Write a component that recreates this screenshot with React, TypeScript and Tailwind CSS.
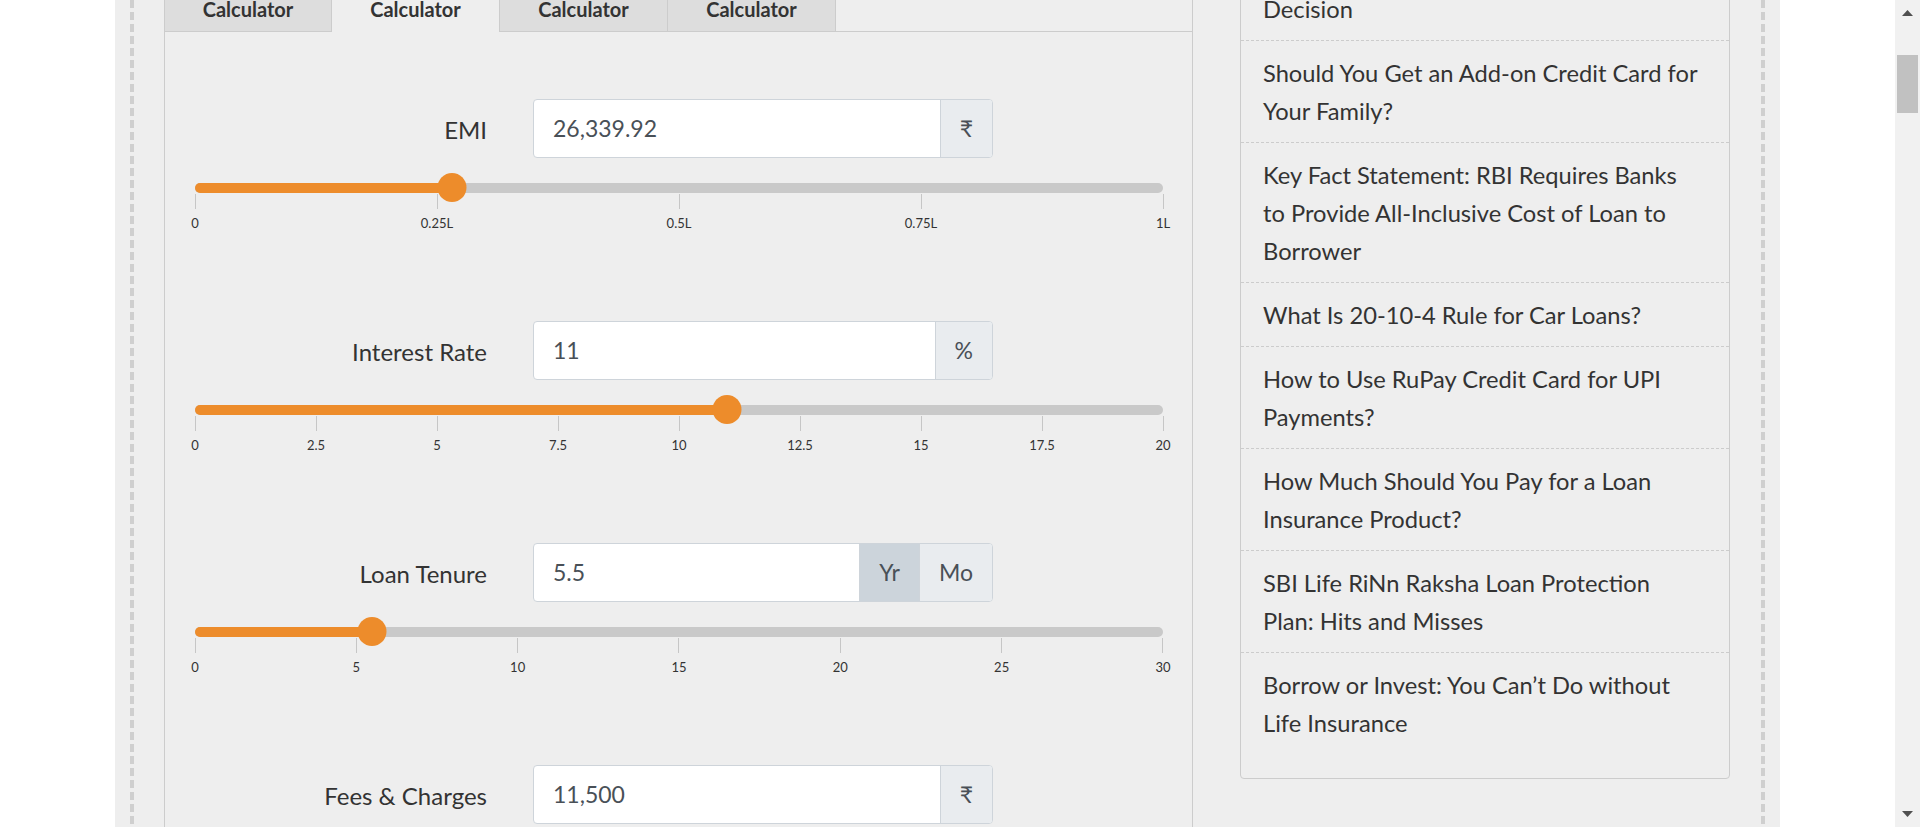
import React from "react";

type Unit = { text: string; active?: boolean };

type RowProps = {
  label: string;
  value: string;
  units: Unit[];
  pct: number;
  ticks: string[];
};

function CalcRow({ label, value, units, pct, ticks }: RowProps) {
  return (
    <div className="mb-[91px]">
      <div className="flex items-center gap-[46px]">
        <div className="w-[292px] pt-[3px] text-right text-[24px] leading-none text-[#333]">{label}</div>
        <div className="flex h-[59px] w-[460px] overflow-hidden rounded-[4px] border border-[#ced4da] bg-white">
          <div className="flex flex-1 items-center pl-[19px] text-[23px] text-[#495057]">{value}</div>
          {units.map((u, i) => (
            <div
              key={i}
              className={
                u.active
                  ? "flex items-center border-l border-[#ced4da] bg-[#ccd4db] px-[19px] text-[23px] text-[#495057]"
                  : "flex items-center border-l border-[#ced4da] bg-[#e9ecef] px-[19px] text-[23px] text-[#495057]"
              }
            >
              {u.text}
            </div>
          ))}
        </div>
      </div>
      <div className="relative mt-[25px] h-[10px] rounded-full bg-[#c9c9c9]">
        <div className="h-full rounded-full bg-[#ed8c2b]" style={{ width: `${pct}%` }} />
        <div
          className="absolute top-[-10px] h-[29px] w-[29px] -translate-x-1/2 rounded-full bg-[#ed8c2b]"
          style={{ left: `${pct}%` }}
        />
      </div>
      <div className="mt-[1px] flex justify-between">
        {ticks.map((t, i) => (
          <div key={i} className="flex w-0 flex-col items-center">
            <div className="h-[15px] w-px shrink-0 bg-[#c6c6c6]" />
            <span className="mt-[7px] whitespace-nowrap text-[13px] leading-[14px] text-[#333]">{t}</span>
          </div>
        ))}
      </div>
    </div>
  );
}

const sideItems: string[][] = [
  ["Decision"],
  ["Should You Get an Add-on Credit Card for", "Your Family?"],
  ["Key Fact Statement: RBI Requires Banks", "to Provide All-Inclusive Cost of Loan to", "Borrower"],
  ["What Is 20-10-4 Rule for Car Loans?"],
  ["How to Use RuPay Credit Card for UPI", "Payments?"],
  ["How Much Should You Pay for a Loan", "Insurance Product?"],
  ["SBI Life RiNn Raksha Loan Protection", "Plan: Hits and Misses"],
  ["Borrow or Invest: You Can\u2019t Do without", "Life Insurance"],
];

const dashed =
  "w-[4px] shrink-0 bg-[repeating-linear-gradient(to_bottom,#cfcfcf_0px,#cfcfcf_8px,transparent_8px,transparent_12px)]";

export default function App() {
  const tabs = ["Calculator", "Calculator", "Calculator", "Calculator"];
  return (
    <div className="flex h-[827px] w-[1920px] overflow-hidden bg-white font-[Lato,sans-serif]">
      <div className="flex flex-1 justify-center">
        <div className="flex w-[1665px] bg-[#eeeeee] px-[15px]">
          <div className={dashed} />
          <div className="flex flex-1 items-start gap-[47px] pl-[30px] pr-[31px]">
            {/* main calculator column */}
            <div className="flex w-[1029px] shrink-0 flex-col">
              <div className="flex h-[32px] shrink-0">
                {tabs.map((t, i) => (
                  <div
                    key={i}
                    className={
                      i === 1
                        ? "flex w-[168px] justify-center border-r border-[#cccccc] bg-[#eeeeee] text-[20px] font-bold leading-[18px] text-[#333]"
                        : i === 0
                        ? "flex w-[168px] justify-center border-x border-b border-[#cccccc] bg-[#dddddd] text-[20px] font-bold leading-[18px] text-[#333]"
                        : "flex w-[168px] justify-center border-r border-b border-[#cccccc] bg-[#dddddd] text-[20px] font-bold leading-[18px] text-[#333]"
                    }
                  >
                    {t}
                  </div>
                ))}
                <div className="flex-1 border-b border-r border-[#cccccc]" />
              </div>
              <div className="border-x border-b border-[#cccccc] bg-[#eeeeee] pl-[30px] pr-[29px] pt-[67px]">
                <CalcRow
                  label="EMI"
                  value="26,339.92"
                  units={[{ text: "\u20B9" }]}
                  pct={26.6}
                  ticks={["0", "0.25L", "0.5L", "0.75L", "1L"]}
                />
                <CalcRow
                  label="Interest Rate"
                  value="11"
                  units={[{ text: "%" }]}
                  pct={55}
                  ticks={["0", "2.5", "5", "7.5", "10", "12.5", "15", "17.5", "20"]}
                />
                <CalcRow
                  label="Loan Tenure"
                  value="5.5"
                  units={[{ text: "Yr", active: true }, { text: "Mo" }]}
                  pct={18.33}
                  ticks={["0", "5", "10", "15", "20", "25", "30"]}
                />
                <CalcRow
                  label="Fees & Charges"
                  value="11,500"
                  units={[{ text: "\u20B9" }]}
                  pct={23}
                  ticks={["0", "10K", "20K", "30K", "40K", "50K"]}
                />
              </div>
            </div>
            {/* sidebar */}
            <div className="w-[490px] shrink-0">
              <div className="-mt-[24px] rounded-[4px] border border-[#cccccc] bg-[#eeeeee] pb-[24px]">
                {sideItems.map((lines, i) => (
                  <div
                    key={i}
                    className={
                      i === sideItems.length - 1
                        ? "pl-[22px] pt-[13px] pb-[12px] text-[23.7px] leading-[38px] text-[#333]"
                        : "border-b border-dashed border-[#cccccc] pl-[22px] pt-[13px] pb-[12px] text-[23.7px] leading-[38px] text-[#333]"
                    }
                  >
                    {lines.map((l, j) => (
                      <div key={j} className="whitespace-nowrap">
                        {l}
                      </div>
                    ))}
                  </div>
                ))}
              </div>
            </div>
          </div>
          <div className={dashed} />
        </div>
      </div>
      {/* scrollbar */}
      <div className="flex w-[25px] shrink-0 flex-col items-center bg-[#f1f1f1]">
        <svg className="mt-[10px]" width="11" height="6" viewBox="0 0 11 6">
          <polygon points="5.5,0 11,6 0,6" fill="#505050" />
        </svg>
        <div className="mt-[39px] h-[58px] w-[21px] bg-[#c1c1c1]" />
        <div className="flex-1" />
        <svg className="mb-[10px]" width="11" height="6" viewBox="0 0 11 6">
          <polygon points="0,0 11,0 5.5,6" fill="#505050" />
        </svg>
      </div>
    </div>
  );
}
